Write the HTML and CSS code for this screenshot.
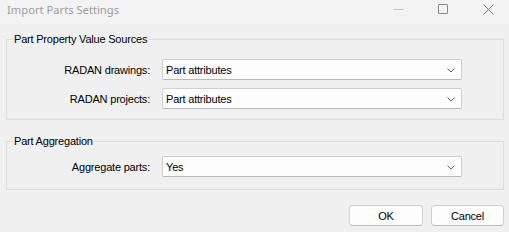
FILE: index.html
```html
<!DOCTYPE html>
<html>
<head>
<meta charset="utf-8">
<link rel="stylesheet" href="styles.css">
</head>
<body>
<div class="window">
  <div class="titlebar">
    <span class="title">Import Parts Settings</span>
    <div class="controls">
      <span class="ctl ctl-min"><svg width="11" height="11" viewBox="0 0 11 11"><line x1="0.5" y1="5.5" x2="10.5" y2="5.5" stroke="#c4c4c4" stroke-width="1"/></svg></span>
      <span class="ctl ctl-max"><svg width="11" height="11" viewBox="0 0 11 11"><rect x="0.5" y="0.5" width="9" height="9" rx="0.5" fill="none" stroke="#8a8a8a" stroke-width="1"/></svg></span>
      <span class="ctl ctl-close"><svg width="11" height="11" viewBox="0 0 11 11"><path d="M0.5 0.5 L10.5 10.5 M10.5 0.5 L0.5 10.5" stroke="#7a7a7a" stroke-width="1" fill="none"/></svg></span>
    </div>
  </div>
  <div class="body">
    <fieldset class="group group-sources">
      <legend>Part Property Value Sources</legend>
      <div class="row">
        <label class="lbl">RADAN drawings:</label>
        <div class="combo"><span>Part attributes</span><svg class="chev" width="8" height="5" viewBox="0 0 8 5"><polyline points="0.5,0.5 4,4 7.5,0.5" fill="none" stroke="#606060" stroke-width="1"/></svg></div>
      </div>
      <div class="row">
        <label class="lbl">RADAN projects:</label>
        <div class="combo"><span>Part attributes</span><svg class="chev" width="8" height="5" viewBox="0 0 8 5"><polyline points="0.5,0.5 4,4 7.5,0.5" fill="none" stroke="#606060" stroke-width="1"/></svg></div>
      </div>
    </fieldset>
    <fieldset class="group group-agg">
      <legend>Part Aggregation</legend>
      <div class="row">
        <label class="lbl">Aggregate parts:</label>
        <div class="combo"><span>Yes</span><svg class="chev" width="8" height="5" viewBox="0 0 8 5"><polyline points="0.5,0.5 4,4 7.5,0.5" fill="none" stroke="#606060" stroke-width="1"/></svg></div>
      </div>
    </fieldset>
    <div class="buttons">
      <button class="btn btn-ok">OK</button>
      <button class="btn">Cancel</button>
    </div>
  </div>
</div>
</body>
</html>
```
FILE: styles.css
```css
* { box-sizing: border-box; }
html, body { margin: 0; padding: 0; }
body {
  width: 509px;
  height: 232px;
  background: #f0f0f0;
  font-family: "Liberation Sans", Arial, sans-serif;
  font-size: 11px;
  letter-spacing: -0.2px;
  color: #000;
  overflow: hidden;
}
.window { width: 509px; height: 232px; display: flex; flex-direction: column; }
.titlebar {
  height: 24px;
  background: #f3f3f3;
  display: flex;
  align-items: center;
  justify-content: space-between;
  padding-left: 7px;
}
.title {
  font-family: "Noto Sans", "Open Sans", sans-serif;
  font-size: 11.2px;
  letter-spacing: 0;
  color: #9c9c9c;
  line-height: 16px;
  margin-top: -4px;
}
.controls {
  display: flex;
  align-items: flex-start;
  height: 24px;
  gap: 34px;
  padding-right: 15px;
  padding-top: 4px;
}
.ctl { display: block; width: 11px; height: 11px; }
.ctl svg { display: block; }
.body {
  flex: 1;
  background: #f0f0f0;
  padding: 9px 5px 0 6px;
  display: flex;
  flex-direction: column;
}
.group {
  margin: 0;
  border: 1px solid #dcdcdc;
  min-width: 0;
  padding: 13px 0 10px 6px;
  display: flex;
  flex-direction: column;
  gap: 8px;
}
.group legend {
  padding: 0 1px;
  line-height: 13px;
  height: 13px;
  font-size: 11px;
}
.group-agg { margin-top: 15px; padding-top: 8px; padding-bottom: 12px; }
.row { display: flex; align-items: center; height: 21px; }
.lbl { width: 138px; text-align: right; padding-right: 1px; }
.combo {
  margin-left: 11px;
  width: 300px;
  height: 21px;
  background: #fdfdfd;
  border: 1px solid #cfcfcf;
  border-bottom-color: #b9b9b9;
  border-radius: 2px;
  display: flex;
  align-items: center;
  justify-content: space-between;
  padding: 0 6px 0 3px;
}
.chev { display: block; margin-top: 1px; }
.buttons {
  margin-top: 15px;
  display: flex;
  justify-content: flex-end;
  gap: 8px;
}
.btn {
  font-family: "Liberation Sans", Arial, sans-serif;
  font-size: 11px;
  letter-spacing: -0.2px;
  color: #000;
  height: 21px;
  width: 73px;
  background: #fdfdfd;
  border: 1px solid #d0d0d0;
  border-bottom-color: #bcbcbc;
  border-radius: 4px;
  padding: 0;
}
.btn-ok { width: 74px; }
```
